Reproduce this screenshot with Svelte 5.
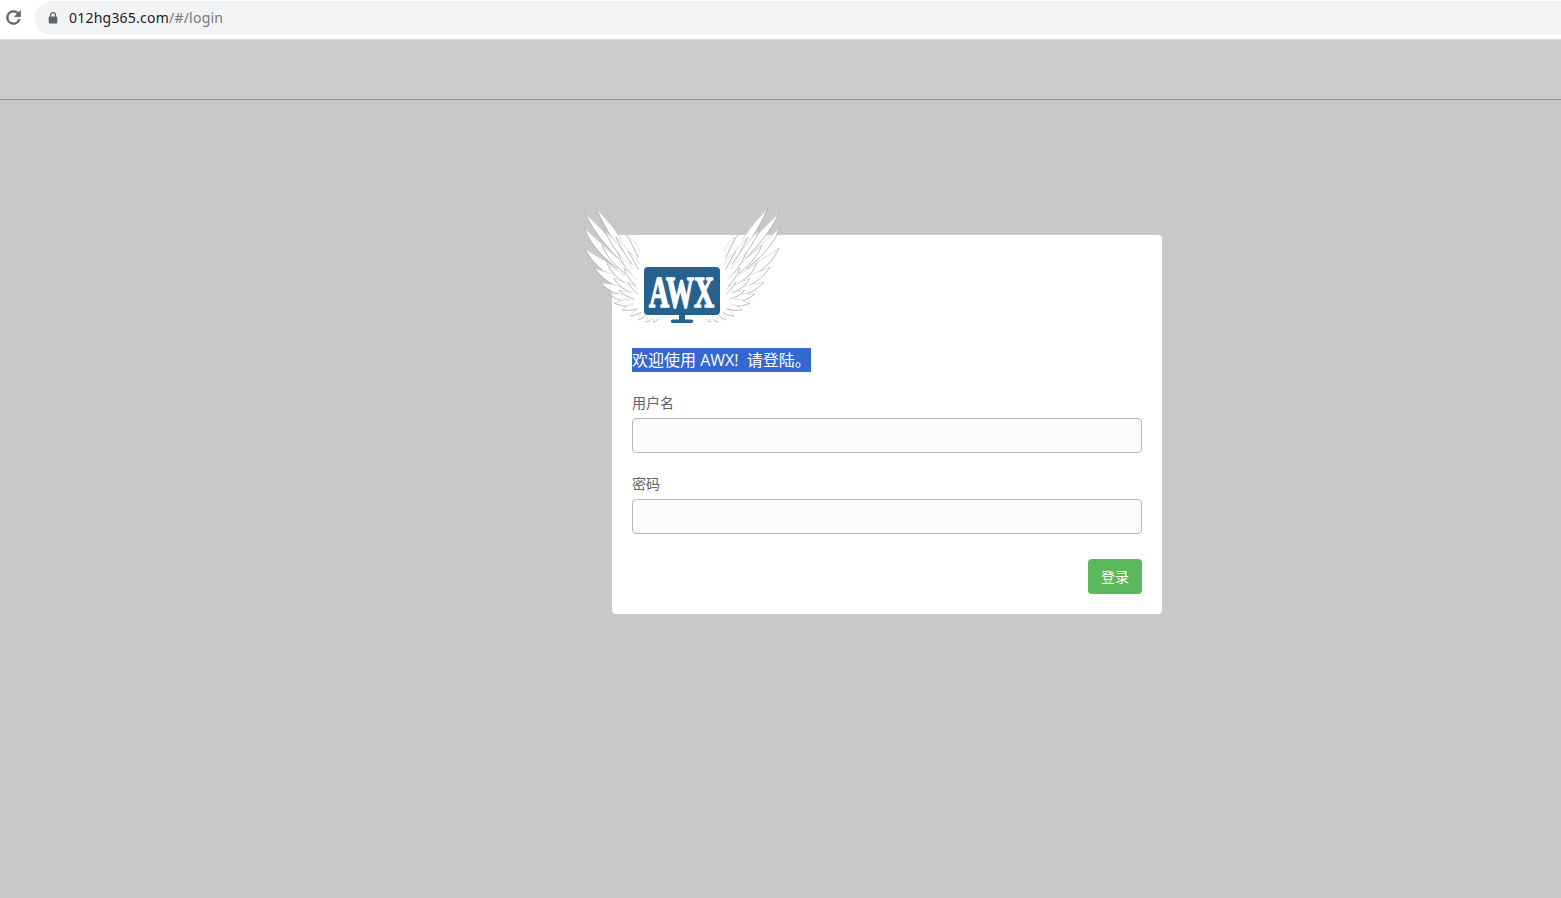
<script>
  let username = $state('');
  let password = $state('');

  // Each feather: tip x, tip y, root x, root y, width, bend
  const feathers = [
    [3, 6, 58, 70, 7, 5],
    [14, 1, 58, 66, 7, 3],
    [2, 21, 58, 76, 8, 7],
    [3, 42, 58, 82, 9, 7],
    [12, 61, 60, 88, 9, 5],
    [18, 76, 60, 92, 8, 4],
    [27, 88, 61, 95, 7, 3],
    [32, 97, 61, 97, 7, 2],
    [40, 104, 62, 99, 6, 1],
    [48, 110, 63, 102, 5, 1],
    [56, 114, 65, 105, 4, 1],
    [64, 116, 71, 109, 4, 1],
    [71, 116, 77, 110, 3, 1],
    [22, 22, 57, 70, 5, 3],
    [20, 39, 58, 77, 6, 4],
    [25, 57, 58, 84, 6, 4],
    [32, 72, 60, 90, 6, 3],
    [37, 84, 61, 94, 5, 2],
    [34, 31, 60, 70, 5, 1],
    [36, 47, 61, 79, 5, 2],
    [42, 62, 62, 86, 5, 2],
    [46, 76, 62, 92, 4, 1],
    [43, 28, 62, 64, 5, -3],
    [46, 45, 62, 72, 4, -1]
  ];

  // Shape of the whole feather and its two outlines, from the tip toward the root
  function vane([tx, ty, rx, ry, w, bend]) {
    const dx = rx - tx;
    const dy = ry - ty;
    const len = Math.hypot(dx, dy);
    const nx = dy / len;
    const ny = -dx / len;
    const at = (t, off) =>
      `${(tx + dx * t + nx * off).toFixed(1)} ${(ty + dy * t + ny * off).toFixed(1)}`;
    const low = `C${at(0.12, -bend * 0.7)} ${at(0.32, -bend - w / 3)} ${at(0.68, -bend * 0.6 - w / 4)}`;
    const high = `C${at(0.14, -bend * 0.2)} ${at(0.25, w - bend)} ${at(0.55, w * 0.6 - bend * 0.5)}`;
    return {
      fill: `M${at(0, 0)}${low}L${at(1, 0)}L${at(0.55, w * 0.6 - bend * 0.5)}` +
        `C${at(0.25, w - bend)} ${at(0.14, -bend * 0.2)} ${at(0, 0)}Z`,
      low: `M${at(0, 0)}${low}`,
      high: `M${at(0, 0)}${high}`
    };
  }

  const vanes = feathers.map(vane);
</script>

<div class="window">
  <div class="toolbar">
    <svg class="reload" viewBox="0 0 24 24" aria-hidden="true">
      <path d="M17.65 6.35A7.96 7.96 0 0 0 12 4a8 8 0 1 0 7.73 10h-2.08A6 6 0 1 1 12 6c1.66 0 3.14.69 4.22 1.78L13 11h7V4z" />
    </svg>
    <div class="address">
      <svg class="lock" viewBox="0 0 10 12" aria-hidden="true">
        <path d="M2.5 5V3.2a2.5 2.5 0 0 1 5 0V5" fill="none" stroke="#5f6368" stroke-width="1.3" />
        <rect x="0.7" y="4.4" width="8.6" height="7.2" rx="1" fill="#5f6368" />
      </svg>
      <span class="url">012hg365.com<span class="path">/#/login</span></span>
    </div>
  </div>

  <header></header>

  <main>
    <form class="card" onsubmit={(e) => e.preventDefault()}>
      <svg class="logo" viewBox="0 0 200 120" role="img" aria-label="AWX">
        <defs>
          <g id="wing">
            {#each vanes as v}
              <path d={v.fill} fill="#fff" />
              <path d={v.low} fill="none" stroke="#a2a2a2" stroke-width="0.75" />
              <path d={v.high} fill="none" stroke="#c2c2c2" stroke-width="0.55" />
            {/each}
          </g>
        </defs>
        <use href="#wing" />
        <use href="#wing" transform="translate(200 0) scale(-1 1)" />
        <rect x="62" y="61" width="76" height="48" rx="4" fill="#26628f" />
        <path d="M97 108h6v5.500h6.500a1.700 1.700 0 0 1 0 3.500h-19a1.700 1.700 0 0 1 0-3.500h6.500z" fill="#26628f" />
        <text x="67" y="100.500" textLength="65" lengthAdjust="spacingAndGlyphs">AWX</text>
      </svg>

      <div class="welcome"><span>欢迎使用 AWX!&nbsp; 请登陆。</span></div>

      <label for="user">用户名</label>
      <input id="user" type="text" bind:value={username} />

      <label for="pass">密码</label>
      <input id="pass" type="password" bind:value={password} />

      <button type="submit">登录</button>
    </form>
  </main>
</div>

<style>
  :global(body) {
    margin: 0;
    background: #c9c9c9;
  }
  .window {
    height: 898px;
    display: flex;
    flex-direction: column;
    overflow: hidden;
    font-family: "Open Sans", "Noto Sans CJK SC", sans-serif;
  }
  .toolbar {
    box-sizing: border-box;
    height: 40px;
    padding: 1px 0 4px 4px;
    display: flex;
    align-items: flex-start;
    background: #fff;
    border-bottom: 1px solid #dcdcdc;
  }
  .reload {
    width: 21px;
    height: 21px;
    margin: 6px 0 0 -1.500px;
    fill: #5f6368;
    stroke: #5f6368;
    stroke-width: 0.7;
  }
  .address {
    flex: 1;
    height: 34px;
    margin-left: 11.500px;
    padding-left: 13px;
    display: flex;
    align-items: center;
    border-radius: 17px 0 0 17px;
    background: #f1f3f4;
  }
  .lock {
    width: 10px;
    height: 12px;
    margin-right: 11px;
  }
  .url {
    font-family: "Noto Sans", sans-serif;
    font-size: 14px;
    line-height: 20px;
    letter-spacing: 0.22px;
    color: #202124;
  }
  .path {
    color: #75787c;
  }
  header {
    box-sizing: border-box;
    height: 60px;
    background: #cccccc;
    border-bottom: 1px solid #939393;
  }
  main {
    flex: 1;
    padding: 135px 0 0 612px;
    background: #c9c9c9;
  }
  .card {
    position: relative;
    box-sizing: border-box;
    width: 550px;
    height: 379px;
    padding: 113px 20px 20px;
    display: flex;
    flex-direction: column;
    border-radius: 4px;
    background: #fff;
  }
  .logo {
    position: absolute;
    left: -30px;
    top: -29px;
    width: 200px;
    height: 120px;
  }
  .logo text {
    font-family: "Liberation Serif", serif;
    font-weight: 700;
    font-size: 44px;
    fill: #fff;
    stroke: #fff;
    stroke-width: 1.5;
  }
  .welcome {
    height: 24px;
    margin-bottom: 21px;
    font-size: 16px;
    line-height: 24px;
    color: #fff;
  }
  .welcome span {
    display: inline-block;
    width: 179px;
    height: 24px;
    white-space: nowrap;
    background: #3367d1;
  }
  label {
    height: 20px;
    margin-bottom: 5px;
    font-size: 14px;
    line-height: 20px;
    color: #606266;
  }
  input {
    box-sizing: border-box;
    width: 510px;
    height: 35px;
    margin: 0 0 21px;
    padding: 0 12px;
    border: 1px solid #b7b7b7;
    border-radius: 4px;
    background: #fcfcfc;
    font: inherit;
    font-size: 14px;
    outline: none;
  }
  button {
    align-self: flex-end;
    width: 54px;
    height: 35px;
    margin-top: 4px;
    padding: 0;
    border: 0;
    border-radius: 4px;
    background: #5cb85c;
    color: #fff;
    font: inherit;
    font-size: 14px;
    line-height: 35px;
  }
</style>
